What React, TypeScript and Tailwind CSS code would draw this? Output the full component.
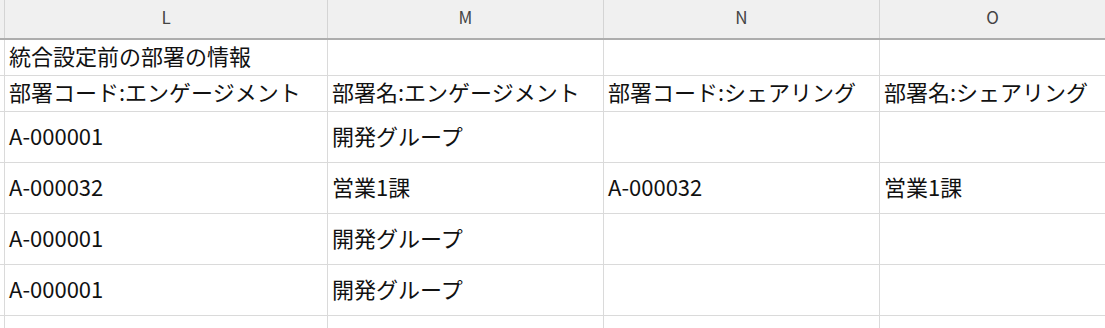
const font = { fontFamily: '"Noto Sans CJK JP", "Noto Sans", sans-serif' };

const columns = ["L", "M", "N", "O"];

const rows: { h: string; cells: string[] }[] = [
  { h: "h-[36px]", cells: ["統合設定前の部署の情報", "", "", ""] },
  {
    h: "h-[36px]",
    cells: ["部署コード:エンゲージメント", "部署名:エンゲージメント", "部署コード:シェアリング", "部署名:シェアリング"],
  },
  { h: "h-[51px]", cells: ["A-000001", "開発グループ", "", ""] },
  { h: "h-[51px]", cells: ["A-000032", "営業1課", "A-000032", "営業1課"] },
  { h: "h-[51px]", cells: ["A-000001", "開発グループ", "", ""] },
  { h: "h-[51px]", cells: ["A-000001", "開発グループ", "", ""] },
  { h: "h-[51px]", cells: ["", "", "", ""] },
];

const widths = ["w-[323px]", "w-[276px]", "w-[276px]", "flex-1"];

export default function App() {
  return (
    <div className="w-[1105px] h-[328px] overflow-hidden bg-white" style={font}>
      {/* Column header */}
      <div className="flex h-[40px] bg-[#f0f0f0] border-b-2 border-[#adadad]">
        <div className="w-[5px] shrink-0 border-r border-[#d4d4d4]" />
        {columns.map((c, i) => (
          <div
            key={c}
            className={`${widths[i]} shrink-0 flex justify-center pt-[5px] text-[17px] leading-[24px] text-[#444444] ${
              i < 3 ? "border-r border-[#d4d4d4]" : ""
            }`}
          >
            {c}
          </div>
        ))}
      </div>

      {/* Cells */}
      {rows.map((r, ri) => (
        <div key={ri} className={`flex ${r.h} border-b border-[#dadada]`}>
          <div className="w-[5px] shrink-0 border-r border-[#dadada]" />
          {r.cells.map((t, ci) => (
            <div
              key={ci}
              className={`${widths[ci]} shrink-0 flex items-center pl-[4px] pb-[5px] text-[22px] leading-none text-[#111111] whitespace-nowrap overflow-hidden ${
                ci < 3 ? "border-r border-[#dadada]" : ""
              }`}
            >
              {t}
            </div>
          ))}
        </div>
      ))}
    </div>
  );
}
